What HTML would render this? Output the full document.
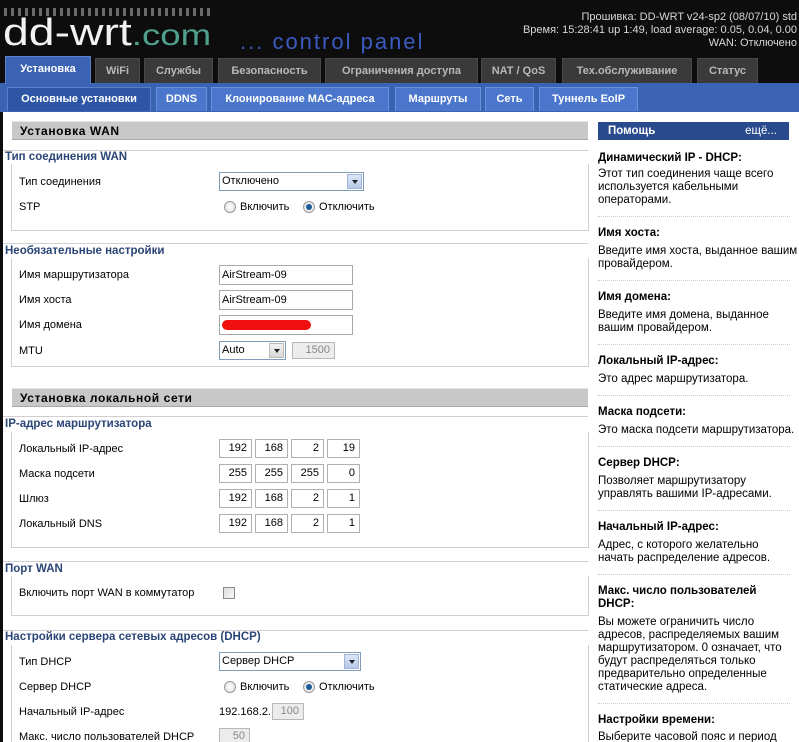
<!DOCTYPE html>
<html style="overflow:hidden;height:742px"><head><meta charset="utf-8">
<style>
*{margin:0;padding:0;box-sizing:border-box}
body{width:799px;height:742px;overflow:hidden;background:#0d0d0d;font-family:"Liberation Sans",Tahoma,sans-serif;font-size:11px;color:#000;position:relative}
.a{position:absolute;white-space:nowrap}
.tab{position:absolute;top:58px;height:25px;background:#3a3a3a;border:1px solid #4a4a4a;border-bottom:none;color:#b8b8b8;font-weight:bold;font-size:11px;line-height:24px;text-align:center}
.tab.on{background:#3b63b3;color:#fff;border-color:#5a80c8;top:56px;height:28px}
.st{position:absolute;top:87px;height:24px;background:#4a76cc;border:1px solid #6a92dc;border-bottom:none;color:#fff;font-weight:bold;line-height:22px;text-align:center}
.st.on{background:#2e56a6;border-color:#5a80c8}
.sh{position:absolute;left:12px;width:576px;height:19px;background:#c8c8c8;border-top:1px solid #e4e4e4;border-bottom:1px solid #a8a8a8;font-weight:bold;font-size:12px;letter-spacing:.6px;padding-left:8px;line-height:18px}
.lg{position:absolute;left:5px;color:#2b4576;font-weight:bold;font-size:11.5px}
.hl{position:absolute;left:3px;width:585px;height:1px;background:#cfcfcf}
.bx{position:absolute;left:11px;width:578px;border:1px solid #cfcfcf;border-top:none}
.lb{position:absolute;left:19px}
.in{position:absolute;left:219px;width:134px;height:20px;border:1px solid #a8a8a8;background:#fff;padding-left:2px;line-height:18px}
.sel{position:absolute;left:219px;height:19px;border:1px solid #7f9db9;background:#fff;padding-left:2px;line-height:17px}
.sel i{position:absolute;right:1px;top:1px;width:15px;height:15px;background:linear-gradient(#dce6f6,#b7c9ea);border:1px solid #a0b4d8}
.sel i:after{content:"";position:absolute;left:4px;top:5px;border:3px solid transparent;border-top:4px solid #222}
.sel.g i{background:linear-gradient(#f2f2f2,#d8d8d8);border-color:#bbb}
.rd{position:absolute;width:12px;height:12px;border-radius:50%;border:1px solid #9a9a9a;background:radial-gradient(#fff,#ddd)}
.rd.on:after{content:"";position:absolute;left:2px;top:2px;width:6px;height:6px;border-radius:50%;background:#1d5a9a}
.ip{position:absolute;width:33px;height:19px;border:1px solid #b0b0b0;background:#fff;text-align:right;padding-right:4px;line-height:17px}
.dis{position:absolute;height:17px;border:1px solid #b8b8b8;background:#ececec;color:#888;text-align:right;padding-right:4px;line-height:15px}
.hh{position:absolute;left:598px;font-weight:bold;font-size:11.5px;white-space:nowrap}
.ht{position:absolute;left:598px;line-height:13px;white-space:nowrap;font-size:11.5px}
.dt{position:absolute;left:598px;width:192px;border-top:1px dotted #ccc}
</style></head><body>
<div class="a" style="left:4px;top:8px;width:210px;height:8px;background:repeating-linear-gradient(90deg,#aaa 0 3px,transparent 3px 7px);opacity:.6"></div>
<div class="a" style="left:3px;top:14px;font-size:38px;color:#f2f2f2;line-height:38px;transform:scaleX(1.22);transform-origin:left top">dd-wrt<span style="color:#4fa08c;font-size:30px">.com</span></div>
<div class="a" style="left:240px;top:29px;font-size:22px;color:#3b5bc0;letter-spacing:2px">... control panel</div>
<div class="a" style="right:2px;top:11px;color:#d8d8d8;font-size:11px;text-align:right;line-height:13px">Прошивка: DD-WRT v24-sp2 (08/07/10) std<br>Время: 15:28:41 up 1:49, load average: 0.05, 0.04, 0.00<br>WAN: Отключено</div>
<div class="a" style="left:0;top:83px;width:799px;height:29px;background:#3b63b3"></div>
<div class="tab on" style="left:5px;width:86px">Установка</div>
<div class="tab" style="left:95px;width:45px">WiFi</div>
<div class="tab" style="left:144px;width:69px">Службы</div>
<div class="tab" style="left:218px;width:103px">Безопасность</div>
<div class="tab" style="left:325px;width:153px">Ограничения доступа</div>
<div class="tab" style="left:481px;width:75px">NAT / QoS</div>
<div class="tab" style="left:562px;width:130px">Тех.обслуживание</div>
<div class="tab" style="left:697px;width:61px">Статус</div>
<div class="st on" style="left:7px;width:144px">Основные установки</div>
<div class="st" style="left:156px;width:51px">DDNS</div>
<div class="st" style="left:211px;width:178px">Клонирование MAC-адреса</div>
<div class="st" style="left:395px;width:86px">Маршруты</div>
<div class="st" style="left:485px;width:49px">Сеть</div>
<div class="st" style="left:539px;width:99px">Туннель EoIP</div>
<div class="a" style="left:3px;top:112px;width:796px;height:630px;background:#fff"></div>
<div class="a" style="left:0;top:0;width:799px;height:742px;overflow:hidden">

<div class="sh" style="top:121px">Установка WAN</div>
<div class="hl" style="top:150px"></div>
<div class="lg" style="top:151px">Тип соединения WAN</div>
<div class="bx" style="top:164px;height:67px"></div>
<div class="lb" style="top:176px">Тип соединения</div>
<div class="sel" style="top:172px;width:145px">Отключено<i></i></div>
<div class="lb" style="top:201px">STP</div>
<div class="rd" style="left:224px;top:201px"></div><div class="a" style="left:240px;top:201px">Включить</div>
<div class="rd on" style="left:303px;top:201px"></div><div class="a" style="left:319px;top:201px">Отключить</div>

<div class="hl" style="top:243px"></div>
<div class="lg" style="top:245px">Необязательные настройки</div>
<div class="bx" style="top:258px;height:109px"></div>
<div class="lb" style="top:269px">Имя маршрутизатора</div><div class="in" style="top:265px">AirStream-09</div>
<div class="lb" style="top:294px">Имя хоста</div><div class="in" style="top:290px">AirStream-09</div>
<div class="lb" style="top:319px">Имя домена</div><div class="in" style="top:315px"><span class="a" style="left:2px;top:4px;width:89px;height:10px;border-radius:5px;background:#f01010"></span></div>
<div class="lb" style="top:345px">MTU</div>
<div class="sel g" style="left:219px;top:341px;width:67px">Auto<i></i></div>
<div class="dis" style="left:292px;top:342px;width:43px">1500</div>

<div class="sh" style="top:388px">Установка локальной сети</div>
<div class="hl" style="top:416px"></div>
<div class="lg" style="top:418px">IP-адрес маршрутизатора</div>
<div class="bx" style="top:432px;height:116px"></div>
<div class="lb" style="top:443px">Локальный IP-адрес</div>
<div class="lb" style="top:468px">Маска подсети</div>
<div class="lb" style="top:493px">Шлюз</div>
<div class="lb" style="top:518px">Локальный DNS</div>

<div class="ip" style="left:219px;top:439px">192</div><div class="ip" style="left:255px;top:439px">168</div><div class="ip" style="left:291px;top:439px">2</div><div class="ip" style="left:327px;top:439px">19</div>
<div class="ip" style="left:219px;top:464px">255</div><div class="ip" style="left:255px;top:464px">255</div><div class="ip" style="left:291px;top:464px">255</div><div class="ip" style="left:327px;top:464px">0</div>
<div class="ip" style="left:219px;top:489px">192</div><div class="ip" style="left:255px;top:489px">168</div><div class="ip" style="left:291px;top:489px">2</div><div class="ip" style="left:327px;top:489px">1</div>
<div class="ip" style="left:219px;top:514px">192</div><div class="ip" style="left:255px;top:514px">168</div><div class="ip" style="left:291px;top:514px">2</div><div class="ip" style="left:327px;top:514px">1</div>

<div class="hl" style="top:561px"></div>
<div class="lg" style="top:563px">Порт WAN</div>
<div class="bx" style="top:576px;height:40px"></div>
<div class="lb" style="top:587px">Включить порт WAN в коммутатор</div>
<div class="a" style="left:223px;top:587px;width:12px;height:12px;border:1px solid #888;background:linear-gradient(135deg,#ddd,#f8f8f8)"></div>

<div class="hl" style="top:630px"></div>
<div class="lg" style="top:631px">Настройки сервера сетевых адресов (DHCP)</div>
<div class="bx" style="top:645px;height:110px"></div>
<div class="lb" style="top:656px">Тип DHCP</div>
<div class="sel" style="top:652px;width:142px">Сервер DHCP<i></i></div>
<div class="lb" style="top:681px">Сервер DHCP</div>
<div class="rd" style="left:224px;top:681px"></div><div class="a" style="left:240px;top:681px">Включить</div>
<div class="rd on" style="left:303px;top:681px"></div><div class="a" style="left:319px;top:681px">Отключить</div>
<div class="lb" style="top:706px">Начальный IP-адрес</div>
<div class="a" style="left:219px;top:706px">192.168.2.</div>
<div class="dis" style="left:272px;top:703px;width:32px">100</div>
<div class="lb" style="top:731px">Макс. число пользователей DHCP</div>
<div class="dis" style="left:219px;top:728px;width:31px">50</div>

<div class="a" style="left:598px;top:122px;width:191px;height:18px;background:#2a4a8e;color:#fff;font-weight:bold;font-size:11.5px;line-height:18px;padding-left:10px">Помощь<span style="position:absolute;right:12px;font-weight:normal">ещё...</span></div>
<div class="hh" style="top:152px">Динамический IP - DHCP:</div>
<div class="ht" style="top:168px">Этот тип соединения чаще всего<br>используется кабельными<br>операторами.</div>
<div class="dt" style="top:216px"></div>
<div class="hh" style="top:227px">Имя хоста:</div>
<div class="ht" style="top:245px">Введите имя хоста, выданное вашим<br>провайдером.</div>
<div class="dt" style="top:280px"></div>
<div class="hh" style="top:291px">Имя домена:</div>
<div class="ht" style="top:309px">Введите имя домена, выданное<br>вашим провайдером.</div>
<div class="dt" style="top:344px"></div>
<div class="hh" style="top:355px">Локальный IP-адрес:</div>
<div class="ht" style="top:373px">Это адрес маршрутизатора.</div>
<div class="dt" style="top:395px"></div>
<div class="hh" style="top:406px">Маска подсети:</div>
<div class="ht" style="top:424px">Это маска подсети маршрутизатора.</div>
<div class="dt" style="top:446px"></div>
<div class="hh" style="top:457px">Сервер DHCP:</div>
<div class="ht" style="top:475px">Позволяет маршрутизатору<br>управлять вашими IP-адресами.</div>
<div class="dt" style="top:510px"></div>
<div class="hh" style="top:521px">Начальный IP-адрес:</div>
<div class="ht" style="top:539px">Адрес, с которого желательно<br>начать распределение адресов.</div>
<div class="dt" style="top:574px"></div>
<div class="hh" style="top:585px;line-height:13px">Макс. число пользователей<br>DHCP:</div>
<div class="ht" style="top:616px">Вы можете ограничить число<br>адресов, распределяемых вашим<br>маршрутизатором. 0 означает, что<br>будут распределяться только<br>предварительно определенные<br>статические адреса.</div>
<div class="dt" style="top:703px"></div>
<div class="hh" style="top:714px">Настройки времени:</div>
<div class="ht" style="top:731px">Выберите часовой пояс и период</div>
</div>
</body></html>
